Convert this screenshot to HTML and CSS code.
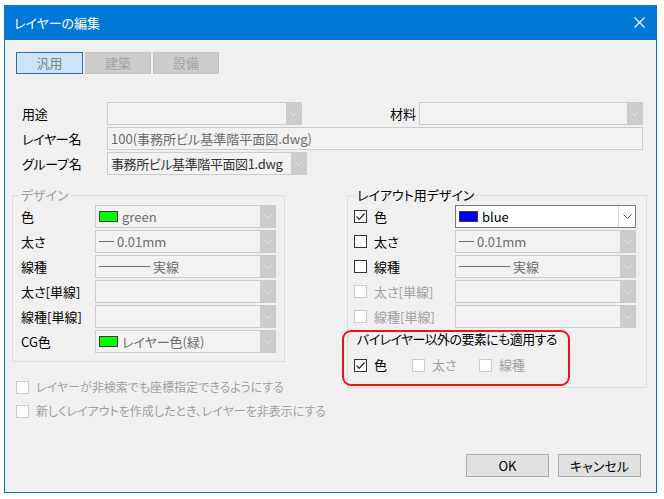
FILE: index.html
```html
<!DOCTYPE html>
<html lang="ja">
<head>
    <meta charset="UTF-8">
    <title>レイヤーの編集</title>
    <link rel="stylesheet" href="styles.css">
</head>
<body>
    <div class="window">
        <div class="titlebar">
            <span>レイヤーの編集</span>
            <svg class="close" width="11" height="11" viewBox="0 0 11 11">
                <path d="M0.5 0.5 L10.5 10.5 M10.5 0.5 L0.5 10.5" stroke="#fff" stroke-width="1.1" fill="none"/>
            </svg>
        </div>

        <div class="tabs">
            <div class="tab active">汎用</div>
            <div class="tab">建築</div>
            <div class="tab">設備</div>
        </div>

        <div class="fields">
            <div class="row">
                <span class="lbl">用途</span>
                <div class="combo w195">
                    <span class="val"></span>
                    <span class="arrow"><svg width="9" height="5" viewBox="0 0 9 5"><path d="M0.5 0.5 L4.5 4.5 L8.5 0.5" fill="none" stroke="#e6e6e6"/></svg></span>
                </div>
                <span class="lbl-r">材料</span>
                <div class="combo w224">
                    <span class="val"></span>
                    <span class="arrow"><svg width="9" height="5" viewBox="0 0 9 5"><path d="M0.5 0.5 L4.5 4.5 L8.5 0.5" fill="none" stroke="#e6e6e6"/></svg></span>
                </div>
            </div>
            <div class="row">
                <span class="lbl">レイヤー名</span>
                <div class="combo w536">
                    <span class="val">100(事務所ビル基準階平面図.dwg)</span>
                </div>
            </div>
            <div class="row">
                <span class="lbl">グループ名</span>
                <div class="combo w200 dark">
                    <span class="val tight">事務所ビル基準階平面図1.dwg</span>
                    <span class="arrow"><svg width="9" height="5" viewBox="0 0 9 5"><path d="M0.5 0.5 L4.5 4.5 L8.5 0.5" fill="none" stroke="#e6e6e6"/></svg></span>
                </div>
            </div>
        </div>

        <div class="groups">
            <div class="left-col">
                <div class="group group-left">
                    <span class="legend dim">デザイン</span>
                    <div class="rows">
                        <div class="grow">
                            <span class="glabel">色</span>
                            <div class="combo w181">
                                <span class="val"><i class="sw green"></i>green</span>
                                <span class="arrow"><svg width="9" height="5" viewBox="0 0 9 5"><path d="M0.5 0.5 L4.5 4.5 L8.5 0.5" fill="none" stroke="#e6e6e6"/></svg></span>
                            </div>
                        </div>
                        <div class="grow">
                            <span class="glabel">太さ</span>
                            <div class="combo w181">
                                <span class="val"><i class="ln short"></i>0.01mm</span>
                                <span class="arrow"><svg width="9" height="5" viewBox="0 0 9 5"><path d="M0.5 0.5 L4.5 4.5 L8.5 0.5" fill="none" stroke="#e6e6e6"/></svg></span>
                            </div>
                        </div>
                        <div class="grow">
                            <span class="glabel">線種</span>
                            <div class="combo w181">
                                <span class="val"><i class="ln long"></i>実線</span>
                                <span class="arrow"><svg width="9" height="5" viewBox="0 0 9 5"><path d="M0.5 0.5 L4.5 4.5 L8.5 0.5" fill="none" stroke="#e6e6e6"/></svg></span>
                            </div>
                        </div>
                        <div class="grow">
                            <span class="glabel">太さ[単線]</span>
                            <div class="combo w181">
                                <span class="val"></span>
                                <span class="arrow"><svg width="9" height="5" viewBox="0 0 9 5"><path d="M0.5 0.5 L4.5 4.5 L8.5 0.5" fill="none" stroke="#e6e6e6"/></svg></span>
                            </div>
                        </div>
                        <div class="grow">
                            <span class="glabel">線種[単線]</span>
                            <div class="combo w181">
                                <span class="val"></span>
                                <span class="arrow"><svg width="9" height="5" viewBox="0 0 9 5"><path d="M0.5 0.5 L4.5 4.5 L8.5 0.5" fill="none" stroke="#e6e6e6"/></svg></span>
                            </div>
                        </div>
                        <div class="grow">
                            <span class="glabel">CG色</span>
                            <div class="combo w181">
                                <span class="val"><i class="sw green"></i>レイヤー色(緑)</span>
                                <span class="arrow"><svg width="9" height="5" viewBox="0 0 9 5"><path d="M0.5 0.5 L4.5 4.5 L8.5 0.5" fill="none" stroke="#e6e6e6"/></svg></span>
                            </div>
                        </div>
                    </div>
                </div>

                <div class="option first"><span class="ck dis"></span>レイヤーが非検索でも座標指定できるようにする</div>
                <div class="option"><span class="ck dis"></span>新しくレイアウトを作成したとき、レイヤーを非表示にする</div>
            </div>

            <div class="group group-right">
                <span class="legend">レイアウト用デザイン</span>
                <div class="rows">
                    <div class="rrow">
                        <span class="ck"><svg width="11" height="11" viewBox="0 0 11 11"><path d="M1.5 5.5 L4.2 8.3 L9.5 2.5" fill="none" stroke="#222" stroke-width="1.2"/></svg></span>
                        <span class="rlabel">色</span>
                        <div class="combo w181 on">
                            <span class="val"><i class="sw blue"></i>blue</span>
                            <span class="arrow"><svg width="9" height="5" viewBox="0 0 9 5"><path d="M0.5 0.5 L4.5 4.5 L8.5 0.5" fill="none" stroke="#444"/></svg></span>
                        </div>
                    </div>
                    <div class="rrow">
                        <span class="ck"></span>
                        <span class="rlabel">太さ</span>
                        <div class="combo w181">
                            <span class="val"><i class="ln short"></i>0.01mm</span>
                            <span class="arrow"><svg width="9" height="5" viewBox="0 0 9 5"><path d="M0.5 0.5 L4.5 4.5 L8.5 0.5" fill="none" stroke="#e6e6e6"/></svg></span>
                        </div>
                    </div>
                    <div class="rrow">
                        <span class="ck"></span>
                        <span class="rlabel">線種</span>
                        <div class="combo w181">
                            <span class="val"><i class="ln long"></i>実線</span>
                            <span class="arrow"><svg width="9" height="5" viewBox="0 0 9 5"><path d="M0.5 0.5 L4.5 4.5 L8.5 0.5" fill="none" stroke="#e6e6e6"/></svg></span>
                        </div>
                    </div>
                    <div class="rrow">
                        <span class="ck dis"></span>
                        <span class="rlabel dim">太さ[単線]</span>
                        <div class="combo w181">
                            <span class="val"></span>
                            <span class="arrow"><svg width="9" height="5" viewBox="0 0 9 5"><path d="M0.5 0.5 L4.5 4.5 L8.5 0.5" fill="none" stroke="#e6e6e6"/></svg></span>
                        </div>
                    </div>
                    <div class="rrow">
                        <span class="ck dis"></span>
                        <span class="rlabel dim">線種[単線]</span>
                        <div class="combo w181">
                            <span class="val"></span>
                            <span class="arrow"><svg width="9" height="5" viewBox="0 0 9 5"><path d="M0.5 0.5 L4.5 4.5 L8.5 0.5" fill="none" stroke="#e6e6e6"/></svg></span>
                        </div>
                    </div>
                </div>

                <div class="apply-text">バイレイヤー以外の要素にも適用する</div>
                <div class="apply-row">
                    <span class="apply-item i1">
                        <span class="ck"><svg width="11" height="11" viewBox="0 0 11 11"><path d="M1.5 5.5 L4.2 8.3 L9.5 2.5" fill="none" stroke="#222" stroke-width="1.2"/></svg></span>色
                    </span>
                    <span class="apply-item i2 dim"><span class="ck dis"></span>太さ</span>
                    <span class="apply-item dim"><span class="ck dis"></span>線種</span>
                </div>

                <div class="highlight"></div>
            </div>
        </div>

        <div class="footer">
            <button>OK</button>
            <button>キャンセル</button>
        </div>
    </div>
</body>
</html>
```

FILE: styles.css
```css
body {
    margin: 0;
    background: #fff;
    font-family: "Noto Sans CJK JP", sans-serif;
    font-size: 13px;
    line-height: 16px;
    font-feature-settings: "palt";
    color: #000;
}
.window {
    margin: 5px 0 0 4px;
    width: 653px;
    height: 488px;
    box-sizing: border-box;
    border: 1px solid #0078d7;
    border-top: none;
    background: #f0f0f0;
    display: flex;
    flex-direction: column;
}
.titlebar {
    height: 35px;
    flex-shrink: 0;
    background: #0078d7;
    color: #fff;
    display: flex;
    align-items: center;
    justify-content: space-between;
    padding: 0 11px 0 9px;
}
.tabs {
    display: flex;
    gap: 2px;
    margin: 12px 0 0 11px;
}
.tab {
    width: 66px;
    height: 22px;
    box-sizing: border-box;
    border: 1px solid #c4c4c4;
    background: #cccccc;
    color: #a3a3a3;
    display: flex;
    align-items: center;
    justify-content: center;
}
.tab.active {
    width: 67px;
    background: #cce4f7;
    border-color: #2f6fae;
    color: #838383;
}
.fields {
    margin: 28px 0 0 17px;
}
.row {
    display: flex;
    align-items: center;
    height: 23px;
    margin-bottom: 2px;
}
.lbl {
    width: 85px;
    letter-spacing: -0.3px;
}
.lbl-r {
    width: 117px;
    box-sizing: border-box;
    text-align: right;
    padding-right: 3px;
}
.combo {
    box-sizing: border-box;
    height: 23px;
    border: 1px solid #cccccc;
    background: #f2f2f2;
    display: flex;
    color: #6d6d6d;
}
.combo.dark {
    color: #333;
}
.combo.on {
    border-color: #7a7a7a;
    background: #fff;
    color: #000;
}
.w181 { width: 181px; }
.w195 { width: 195px; }
.w200 { width: 200px; }
.w224 { width: 224px; }
.w536 { width: 536px; }
.combo .val {
    flex: 1;
    padding-left: 3px;
    display: flex;
    align-items: center;
    gap: 4px;
    white-space: nowrap;
    overflow: hidden;
}
.combo .val.tight {
    letter-spacing: -0.4px;
}
.combo .arrow {
    width: 15px;
    background: #cccccc;
    display: flex;
    align-items: center;
    justify-content: center;
}
.combo.on .arrow {
    width: 16px;
    background: #fff;
    border-left: 1px solid #d9d9d9;
}
.sw {
    display: inline-block;
    width: 19px;
    height: 11px;
    box-sizing: border-box;
    border: 1px solid #3a3a3a;
}
.sw.green { background: #00ff00; }
.sw.blue { background: #0000ff; }
.ln {
    display: inline-block;
    height: 0;
    border-top: 1px solid #6d6d6d;
    margin-right: -1px;
}
.ln.short { width: 15px; }
.ln.long { width: 51px; }
.groups {
    display: flex;
    align-items: flex-start;
    margin-top: 18px;
}
.left-col {
    margin-left: 7px;
    width: 273px;
}
.group {
    box-sizing: border-box;
    border: 1px solid #dcdcdc;
}
.group-left {
    height: 167px;
}
.group-right {
    position: relative;
    margin-left: 62px;
    width: 300px;
    height: 193px;
}
.legend {
    display: block;
    width: fit-content;
    margin: -9px 0 0 6px;
    padding: 0 2px;
    background: #f0f0f0;
}
.group-right .legend {
    margin-left: 7px;
}
.dim {
    color: #a0a0a0;
}
.rows {
    padding-top: 2px;
}
.grow, .rrow {
    display: flex;
    align-items: center;
    height: 23px;
    margin-bottom: 2px;
}
.grow {
    padding-left: 8px;
}
.glabel {
    width: 74px;
}
.rrow {
    padding-left: 6px;
}
.rlabel {
    width: 81px;
    margin-left: 7px;
}
.ck {
    width: 13px;
    height: 13px;
    box-sizing: border-box;
    border: 1px solid #333;
    background: #fff;
    display: inline-flex;
    align-items: center;
    justify-content: center;
    flex-shrink: 0;
}
.ck.dis {
    border-color: #cccccc;
}
.option {
    display: flex;
    align-items: center;
    gap: 7px;
    height: 16px;
    margin: 8px 0 0 4px;
    font-size: 12px;
    color: #a0a0a0;
    white-space: nowrap;
}
.option.first {
    margin-top: 17px;
}
.apply-text {
    margin-top: 3px;
    padding-left: 9px;
    letter-spacing: -0.6px;
}
.apply-row {
    display: flex;
    align-items: center;
    height: 16px;
    margin-top: 10px;
    padding-left: 6px;
}
.apply-item {
    display: flex;
    align-items: center;
    gap: 7px;
}
.apply-item.i1 { width: 58px; }
.apply-item.i2 { width: 67px; }
.highlight {
    position: absolute;
    left: -6px;
    top: 134px;
    width: 228px;
    height: 56px;
    box-sizing: border-box;
    border: 2px solid #e8141b;
    border-radius: 9px;
}
.footer {
    margin-top: auto;
    display: flex;
    justify-content: flex-end;
    gap: 9px;
    padding: 0 15px 15px 0;
}
.footer button {
    width: 83px;
    height: 23px;
    border: 1px solid #adadad;
    background: #e1e1e1;
    font-family: inherit;
    font-size: 13px;
    font-feature-settings: "palt";
    color: #000;
    padding: 0;
}
```
